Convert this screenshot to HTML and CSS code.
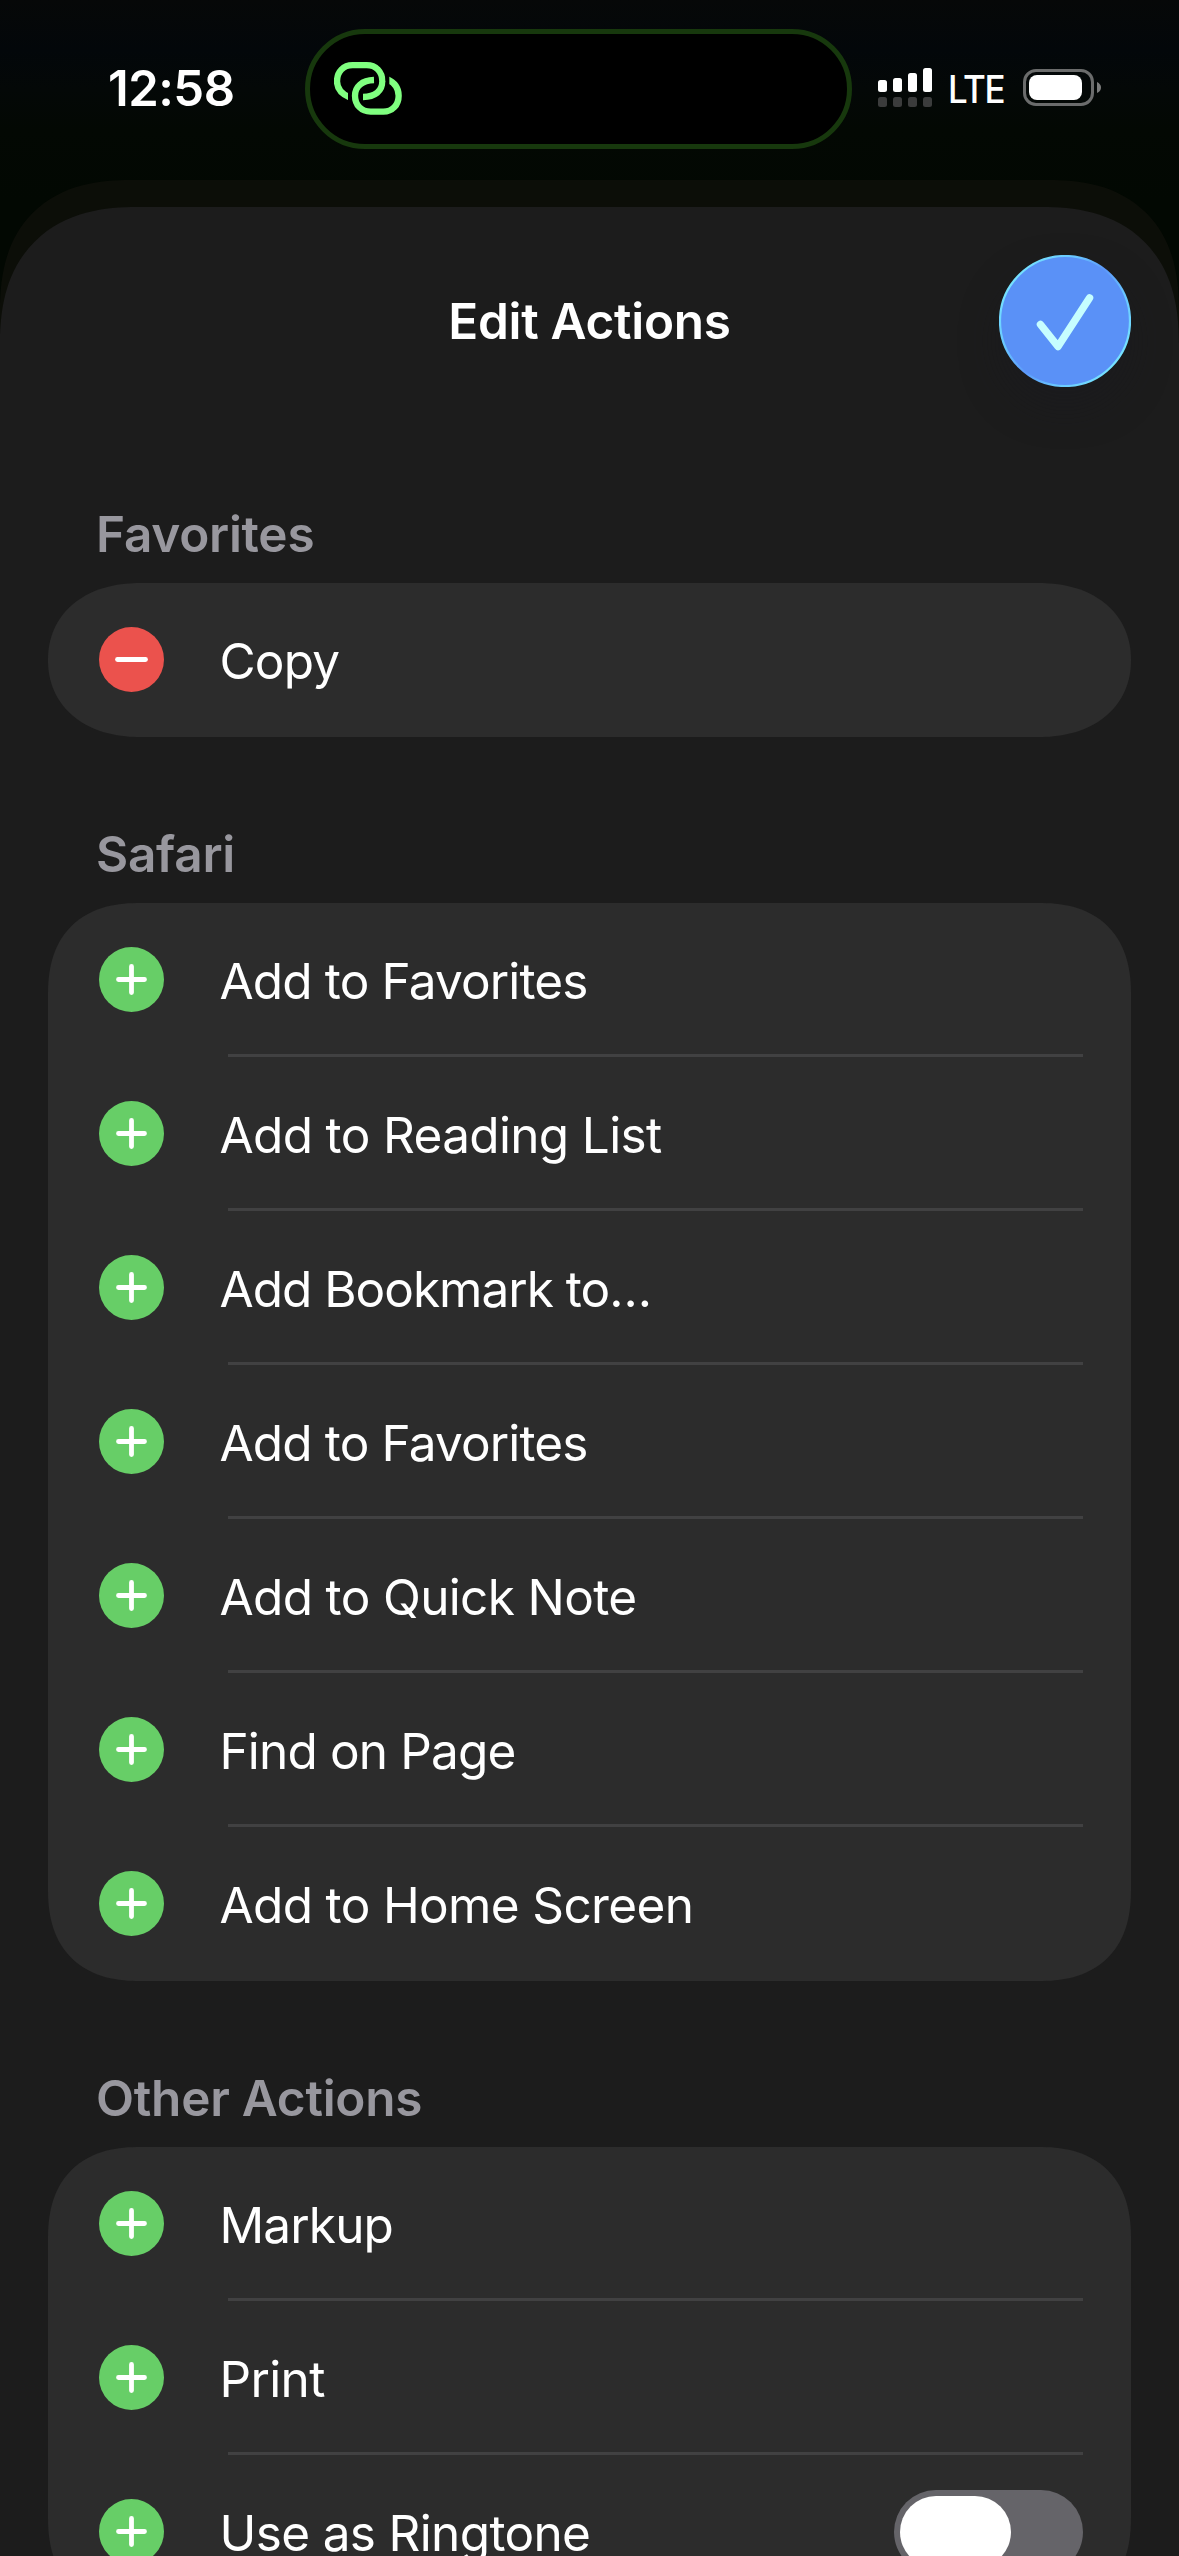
FILE: index.html
```html
<!DOCTYPE html>
<html lang="en">
<head>
<meta charset="utf-8">
<title>Edit Actions</title>
<link rel="stylesheet" href="styles.css">
</head>
<body>
<svg width="0" height="0" class="defs" aria-hidden="true">
  <symbol id="plus" viewBox="0 0 65 65"><circle cx="32.5" cy="32.5" r="32.5" fill="#67ce67"/><path d="M19.5 32.5h26M32.5 19.5v26" stroke="#fff" stroke-width="4.8" stroke-linecap="round"/></symbol>
  <symbol id="minus" viewBox="0 0 65 65"><circle cx="32.5" cy="32.5" r="32.5" fill="#eb524d"/><path d="M18.5 32.5h28" stroke="#fff" stroke-width="4.8" stroke-linecap="round"/></symbol>
</svg>
<div class="screen">
  <header class="status">
    <span class="time">12:58</span>
    <div class="island">
      <svg class="link" viewBox="102 126 204 160" width="68" height="53.3" fill="none" stroke="#80ff80" stroke-width="19">
        <path d="M150 233Q111 217 111 184C111 155 130 135.500 158 135.500H200C228 135.500 247 155 247 184C247 213 225 231 189 231"/>
        <path d="M144 200h13v50h-13z" fill="#000" stroke="none"/>
        <path d="M222 180C186 181 165 200 165 227C165 255 184 275 212 275H250C277 275 296 255 296 227C296 203 283 187 260 177"/>
        <path d="M257 160h11v42h-11z" fill="#000" stroke="none"/>
      </svg>
    </div>
    <svg class="signal" viewBox="0 0 54 39" width="54" height="39">
      <g fill="#fff"><rect y="12" width="9" height="12" rx="2.500"/><rect x="15" y="10" width="9" height="14" rx="2.500"/><rect x="30" y="5" width="9" height="19" rx="2.500"/><rect x="45" width="9" height="24" rx="2.500"/></g>
      <g fill="#3b3c3c"><rect y="29" width="9" height="10" rx="2.500"/><rect x="15" y="29" width="9" height="10" rx="2.500"/><rect x="30" y="29" width="9" height="10" rx="2.500"/><rect x="45" y="29" width="9" height="10" rx="2.500"/></g>
    </svg>
    <span class="lte">LTE</span>
    <svg class="battery" viewBox="0 0 78 37" width="78" height="37">
      <rect x="1.500" y="1.500" width="68" height="34" rx="11.500" fill="none" stroke="#6b6c6c" stroke-width="3"/>
      <rect x="6" y="6" width="53" height="25" rx="8" fill="#fff"/>
      <path d="M74 13Q78 15 78 18.500T74 24z" fill="#7b7c7c"/>
    </svg>
  </header>
  <div class="back-sheet">
    <main class="sheet">
      <div class="nav">
        <h1 class="title">Edit Actions</h1>
        <button class="done" aria-label="Done">
          <svg viewBox="0 0 132 132" width="132" height="132" fill="none">
            <defs><linearGradient id="rim" x1="0.050" y1="0.150" x2="0.950" y2="0.850"><stop offset="0" stop-color="#78e8ff"/><stop offset=".3" stop-color="#68c4ff"/><stop offset=".5" stop-color="#5c98fa"/><stop offset=".7" stop-color="#68c4ff"/><stop offset="1" stop-color="#78e8ff"/></linearGradient></defs>
            <circle cx="66" cy="66" r="65" fill="#5a91f7" stroke="url(#rim)" stroke-width="2.200"/>
            <path d="M41.500 69.500L59 91.500L90.500 43" stroke="#c6feff" stroke-width="7.500" stroke-linecap="round" stroke-linejoin="round"/>
          </svg>
        </button>
      </div>
      <section class="group">
        <h2 class="heading">Favorites</h2>
        <ul class="card card-single">
          <li class="row"><svg class="icon"><use href="#minus"/></svg><span class="label">Copy</span></li>
        </ul>
      </section>
      <section class="group">
        <h2 class="heading">Safari</h2>
        <ul class="card">
          <li class="row"><svg class="icon"><use href="#plus"/></svg><span class="label">Add to Favorites</span></li>
          <li class="row"><svg class="icon"><use href="#plus"/></svg><span class="label label-loose">Add to Reading List</span></li>
          <li class="row"><svg class="icon"><use href="#plus"/></svg><span class="label label-tight">Add Bookmark to…</span></li>
          <li class="row"><svg class="icon"><use href="#plus"/></svg><span class="label">Add to Favorites</span></li>
          <li class="row"><svg class="icon"><use href="#plus"/></svg><span class="label label-loose">Add to Quick Note</span></li>
          <li class="row"><svg class="icon"><use href="#plus"/></svg><span class="label">Find on Page</span></li>
          <li class="row"><svg class="icon"><use href="#plus"/></svg><span class="label label-loose">Add to Home Screen</span></li>
        </ul>
      </section>
      <section class="group">
        <h2 class="heading">Other Actions</h2>
        <ul class="card">
          <li class="row"><svg class="icon"><use href="#plus"/></svg><span class="label">Markup</span></li>
          <li class="row"><svg class="icon"><use href="#plus"/></svg><span class="label label-loose">Print</span></li>
          <li class="row"><svg class="icon"><use href="#plus"/></svg><span class="label label-loose">Use as Ringtone</span><span class="switch"><span class="knob"></span></span></li>
        </ul>
      </section>
    </main>
  </div>
</div>
</body>
</html>
```
FILE: styles.css
```css
* { box-sizing: border-box; }

body {
  margin: 0;
  background: #030803;
  color: #fff;
  font-family: Inter, "Liberation Sans", sans-serif;
}

.defs { position: absolute; }

.screen {
  width: 1179px;
  height: 2556px;
  overflow: hidden;
  background: linear-gradient(#060808 0, #03070a 50px, #040807 90px, #030803 130px, #020802 200px);
}

.status {
  display: flex;
  align-items: flex-start;
  height: 180px;
}

.time {
  width: 197px;
  margin: 59px 0 0 108px;
  font-size: 49px;
  font-weight: 600;
  line-height: 60px;
  letter-spacing: -0.5px;
}

.island {
  width: 547px;
  height: 120px;
  margin-top: 29px;
  padding: 28px 0 0 24px;
  border: 5px solid #17380d;
  border-radius: 60px;
  background: #000;
}

.link { display: block; }

.signal { margin: 68px 0 0 26px; }

.lte {
  width: 75px;
  margin: 66px 0 0 16px;
  font-size: 38px;
  font-weight: 500;
  line-height: 46px;
  letter-spacing: -1.5px;
  transform: scaleX(0.92);
  transform-origin: 0 0;
}

.battery { margin-top: 69px; }

.back-sheet {
  padding-top: 27px;
  border-radius: 110px 110px 0 0;
  background: #0c0e08;
}

.sheet {
  height: 2349px;
  border-radius: 116px 116px 0 0;
  background: #1c1c1c;
}

.nav {
  display: grid;
  grid-template-columns: 132px 1fr 132px;
  height: 256px;
  padding: 48px 48px 0;
}

.title {
  grid-column: 2;
  margin: 36px 0 0;
  font-size: 49.5px;
  font-weight: 600;
  line-height: 60px;
  letter-spacing: -0.3px;
  text-align: center;
}

.done {
  width: 132px;
  height: 132px;
  padding: 0;
  border: 0;
  border-radius: 50%;
  background: none;
  box-shadow: 0 20px 36px rgba(26, 26, 32, 0.5);
}

.done svg { display: block; }

.group { padding: 0 48px; }

.heading {
  height: 120px;
  margin: 0;
  padding: 41px 0 0 48px;
  color: #98979e;
  font-size: 49.5px;
  font-weight: 600;
  line-height: 60px;
  letter-spacing: -0.25px;
}

.group + .group .heading {
  height: 166px;
  padding-top: 87px;
}

.card {
  margin: 0;
  padding: 0;
  border-radius: 78px;
  background: #2c2c2c;
  list-style: none;
}

/* Continuous corners where the browser can draw them */
@supports (corner-shape: superellipse(1.25)) {
  .card {
    border-radius: 92px;
    corner-shape: superellipse(1.25);
  }
  .card-single {
    border-radius: 92px / 77px;
    corner-shape: superellipse(1.12);
  }
  .back-sheet {
    border-radius: 130px 130px 0 0;
    corner-shape: superellipse(1.25);
  }
  .sheet {
    border-radius: 137px 137px 0 0;
    corner-shape: superellipse(1.25);
  }
}

.row {
  display: flex;
  align-items: flex-start;
  height: 154px;
  padding: 0 48px 0 51px;
  background: linear-gradient(#414142, #414142) 180px 151px / 855px 3px no-repeat;
}

.row:last-child { background: none; }

.icon {
  flex: none;
  width: 65px;
  height: 65px;
  margin-top: 44px;
}

.label {
  flex: 1;
  margin: 48px 0 0 55.5px;
  font-size: 49.5px;
  line-height: 60px;
  letter-spacing: -0.85px;
  white-space: nowrap;
}

.label-loose { letter-spacing: -0.65px; }

.label-tight { letter-spacing: -1px; }

.switch {
  width: 189px;
  height: 84px;
  margin-top: 35px;
  padding: 6px;
  border-radius: 42px;
  background: #656469;
}

.knob {
  display: block;
  width: 111px;
  height: 72px;
  border-radius: 36px;
  background: #fff;
}
```
